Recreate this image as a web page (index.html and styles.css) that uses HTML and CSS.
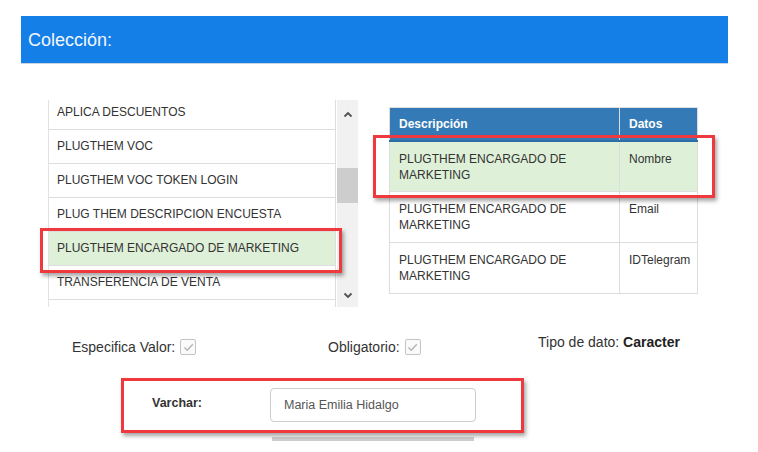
FILE: index.html
```html
<!DOCTYPE html>
<html lang="es">
<head>
<meta charset="utf-8">
<title>Colección</title>
<link rel="stylesheet" href="styles.css">
</head>
<body>
<div class="page">
  <div class="header">Colección:</div>

  <div class="main">
    <div class="list">
      <div class="items">
        <div class="items-inner">
          <div class="item">APLICA DESCUENTOS</div>
          <div class="item">PLUGTHEM VOC</div>
          <div class="item">PLUGTHEM VOC TOKEN LOGIN</div>
          <div class="item">PLUG THEM DESCRIPCION ENCUESTA</div>
          <div class="item selected">PLUGTHEM ENCARGADO DE MARKETING</div>
          <div class="item">TRANSFERENCIA DE VENTA</div>
          <div class="item">&nbsp;</div>
        </div>
      </div>
      <div class="scrollbar">
        <div class="sb-btn">
          <svg width="10" height="7" viewBox="0 0 10 7"><path d="M1.5 5.5 L5 2 L8.5 5.5" fill="none" stroke="#505050" stroke-width="1.8"/></svg>
        </div>
        <div class="sb-track"><div class="sb-thumb"></div></div>
        <div class="sb-btn">
          <svg width="10" height="7" viewBox="0 0 10 7"><path d="M1.5 1.5 L5 5 L8.5 1.5" fill="none" stroke="#505050" stroke-width="1.8"/></svg>
        </div>
      </div>
    </div>

    <table class="datos">
      <colgroup><col class="col1"><col class="col2"></colgroup>
      <thead>
        <tr><th>Descripción</th><th>Datos</th></tr>
      </thead>
      <tbody>
        <tr class="selected"><td>PLUGTHEM ENCARGADO DE MARKETING</td><td>Nombre</td></tr>
        <tr><td>PLUGTHEM ENCARGADO DE MARKETING</td><td>Email</td></tr>
        <tr><td>PLUGTHEM ENCARGADO DE MARKETING</td><td>IDTelegram</td></tr>
      </tbody>
    </table>
  </div>

  <div class="opts">
    <div class="opt opt1"><span>Especifica Valor:</span><span class="chk"><svg width="13" height="13" viewBox="0 0 13 13"><path d="M2.5 6.5 L5.2 9.3 L10.8 3.2" fill="none" stroke="#b4b4b4" stroke-width="1.4"/></svg></span></div>
    <div class="opt opt2"><span>Obligatorio:</span><span class="chk"><svg width="13" height="13" viewBox="0 0 13 13"><path d="M2.5 6.5 L5.2 9.3 L10.8 3.2" fill="none" stroke="#b4b4b4" stroke-width="1.4"/></svg></span></div>
    <div class="tipo">Tipo de dato: <b>Caracter</b></div>
  </div>

  <div class="varchar">
    <label class="vlabel">Varchar:</label>
    <div class="vinput">Maria Emilia Hidalgo</div>
  </div>
  <div class="next-input"></div>

  <div class="mark mark1"></div>
  <div class="mark mark2"></div>
  <div class="mark mark3"></div>
</div>
</body>
</html>
```

FILE: styles.css
```css
* { box-sizing: border-box; }
html, body {
  margin: 0;
  padding: 0;
  background: #ffffff;
}
body {
  font-family: "Liberation Sans", Arial, sans-serif;
  color: #333333;
}
.page {
  position: relative;
  width: 758px;
  height: 452px;
  overflow: hidden;
}
.header {
  margin: 16px 0 0 21px;
  width: 707px;
  height: 48px;
  background: #147fe6;
  border-bottom: 1px solid #c9d4df;
  color: #f2f7ff;
  font-size: 18px;
  line-height: 48px;
  padding-left: 7px;
}
.main {
  display: flex;
  align-items: flex-start;
  margin-top: 36px;
}
.list {
  display: flex;
  margin-left: 48px;
  width: 310px;
  height: 207px;
  border-left: 1px solid #e2e2e2;
}
.items {
  width: 287px;
  border-right: 1px solid #dddddd;
  overflow: hidden;
}
.items-inner {
  margin-top: -4px;
}
.item {
  height: 34px;
  line-height: 33px;
  border-bottom: 1px solid #dddddd;
  padding-left: 8px;
  font-size: 12px;
  color: #333333;
  white-space: nowrap;
}
.item.selected {
  background: #dff0d8;
}
.scrollbar {
  width: 21px;
  margin-left: 1px;
  background: #f1f1f1;
  display: flex;
  flex-direction: column;
}
.sb-btn {
  height: 26px;
  display: flex;
  align-items: center;
  justify-content: center;
}
.sb-btn:first-child { padding-top: 2px; }
.sb-btn:last-child { height: 24px; }
.sb-track {
  flex: 1;
  position: relative;
}
.sb-thumb {
  margin-top: 42px;
  height: 35px;
  background: #cdcdcd;
}
.datos {
  margin-left: 31px;
  margin-top: 7px;
  width: 308px;
  table-layout: fixed;
  border-collapse: collapse;
  font-size: 12px;
}
.col1 { width: 230px; }
.col2 { width: 78px; }
.datos th {
  background: #337ab7;
  color: #ffffff;
  font-weight: bold;
  text-align: left;
  height: 33px;
  padding: 0 9px;
  border: 1px solid #dddddd;
  border-bottom: 2px solid #2e6da4;
}
.datos td {
  vertical-align: top;
  height: 51px;
  padding: 9px 8px 0 9px;
  line-height: 16px;
  border: 1px solid #dddddd;
  color: #333333;
  white-space: normal;
}
.datos tr.selected td {
  background: #dff0d8;
}
.opts {
  display: flex;
  align-items: flex-start;
  margin-top: 27px;
  padding-left: 72px;
  font-size: 14px;
}
.opt {
  display: flex;
  align-items: flex-end;
  gap: 5px;
  margin-top: 4px;
  line-height: 19px;
}
.opt1 { width: 256px; }
.opt2 { width: 210px; }
.chk {
  width: 16px;
  height: 16px;
  border: 1px solid #c4c4c4;
  border-radius: 2px;
  background: #fafafa;
  display: flex;
  align-items: center;
  justify-content: center;
  margin-bottom: 2px;
}
.tipo {
  line-height: 16px;
  color: #333333;
}
.tipo b { color: #222222; }
.varchar {
  display: flex;
  align-items: center;
  margin-top: 31px;
  margin-left: 152px;
}
.vlabel {
  width: 118px;
  font-weight: bold;
  font-size: 12.5px;
  color: #333333;
  padding-bottom: 4px;
}
.vinput {
  width: 206px;
  height: 34px;
  border: 1px solid #cccccc;
  border-radius: 4px;
  font-size: 12.5px;
  line-height: 32px;
  padding-left: 13px;
  color: #555555;
}
.next-input {
  margin: 15px 0 0 272px;
  width: 202px;
  height: 4px;
  background: #cfcfcf;
}
.mark {
  position: absolute;
  border: 3px solid #ee3a3f;
  box-shadow: 2px 3px 4px rgba(0, 0, 0, 0.35);
}
.mark1 { left: 40px; top: 228px; width: 302px; height: 45px; }
.mark2 { left: 373px; top: 135px; width: 342px; height: 63px; }
.mark3 { left: 121px; top: 378px; width: 403px; height: 55px; }
```
